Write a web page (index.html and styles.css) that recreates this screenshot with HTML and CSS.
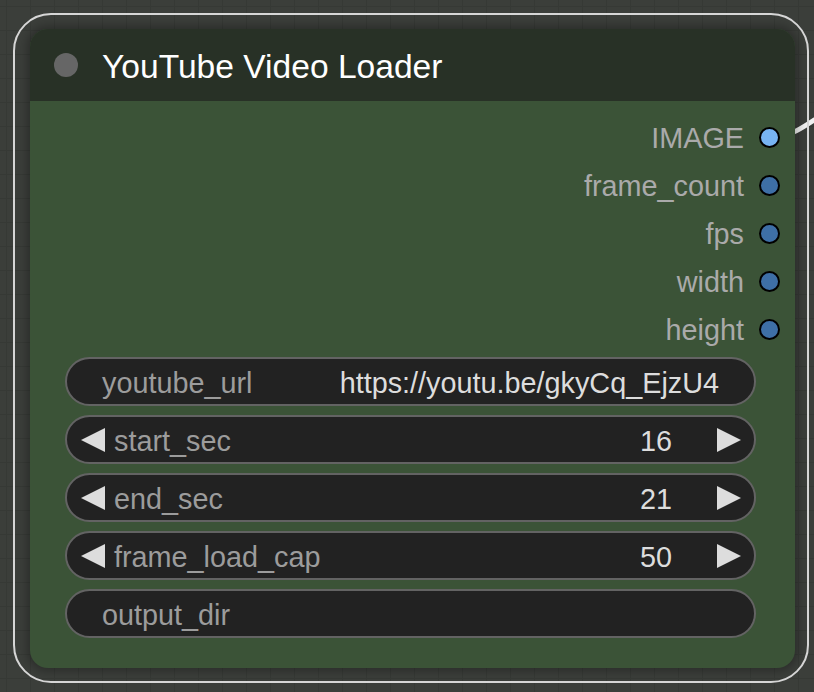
FILE: index.html
```html
<!DOCTYPE html>
<html>
<head>
<meta charset="utf-8">
<link rel="stylesheet" href="styles.css">
</head>
<body>
<svg class="link" width="814" height="692" viewBox="0 0 814 692">
  <path d="M770 137 C 790 137, 800 130, 832 108" fill="none" stroke="#f0f0f0" stroke-width="5" stroke-linecap="round"/>
</svg>
<div class="outline">
  <div class="node">
    <div class="title">
      <span class="title-dot"></span>
      <span class="title-text">YouTube Video Loader</span>
    </div>
    <div class="body">
      <div class="outputs">
        <div class="slot"><span class="slot-label">IMAGE</span><span class="pin pin-image"></span></div>
        <div class="slot"><span class="slot-label">frame_count</span><span class="pin"></span></div>
        <div class="slot"><span class="slot-label">fps</span><span class="pin"></span></div>
        <div class="slot"><span class="slot-label">width</span><span class="pin"></span></div>
        <div class="slot"><span class="slot-label">height</span><span class="pin"></span></div>
      </div>
      <div class="widgets">
        <div class="widget widget-text">
          <span class="label">youtube_url</span>
          <span class="value">https://youtu.be/gkyCq_EjzU4</span>
        </div>
        <div class="widget widget-number">
          <span class="arrow arrow-left"></span>
          <span class="label">start_sec</span>
          <span class="value">16</span>
          <span class="arrow arrow-right"></span>
        </div>
        <div class="widget widget-number">
          <span class="arrow arrow-left"></span>
          <span class="label">end_sec</span>
          <span class="value">21</span>
          <span class="arrow arrow-right"></span>
        </div>
        <div class="widget widget-number">
          <span class="arrow arrow-left"></span>
          <span class="label">frame_load_cap</span>
          <span class="value">50</span>
          <span class="arrow arrow-right"></span>
        </div>
        <div class="widget widget-text">
          <span class="label">output_dir</span>
          <span class="value"></span>
        </div>
      </div>
    </div>
  </div>
</div>
</body>
</html>
```

FILE: styles.css
```css
html, body {
  margin: 0;
  padding: 0;
}
body {
  width: 814px;
  height: 692px;
  overflow: hidden;
  position: relative;
  box-sizing: border-box;
  padding: 13px 0 0 13px;
  font-family: "Liberation Sans", Arial, sans-serif;
  background-color: #3b3e3a;
  background-image:
    linear-gradient(#363935 1px, transparent 1px),
    linear-gradient(90deg, #363935 1px, transparent 1px);
  background-size: 24px 24px;
  background-position: 6px 6px;
}
.link {
  position: absolute;
  left: 0;
  top: 0;
  z-index: 0;
}
.outline {
  position: relative;
  z-index: 1;
  box-sizing: border-box;
  width: 796px;
  height: 670px;
  border: 2px solid #d6d6d6;
  border-radius: 38px;
  padding: 14px 0 0 15px;
}
.node {
  width: 765px;
  height: 639px;
  border-radius: 18px;
  overflow: hidden;
  background: #3b5337;
  box-shadow: 0 0 10px 3px rgba(0, 0, 0, 0.28);
  display: flex;
  flex-direction: column;
}
.title {
  height: 72px;
  flex: none;
  background: #283126;
  display: flex;
  align-items: center;
}
.title-dot {
  width: 24px;
  height: 24px;
  border-radius: 50%;
  background: #666666;
  margin-left: 24px;
  flex: none;
}
.title-text {
  margin-left: 24px;
  padding-top: 4px;
  font-size: 33.6px;
  color: #ffffff;
  white-space: nowrap;
}
.body {
  flex: 1;
  padding-top: 12px;
}
.outputs {
  display: flex;
  flex-direction: column;
}
.slot {
  height: 48px;
  display: flex;
  align-items: center;
  justify-content: flex-end;
  padding-right: 15px;
}
.slot-label {
  font-size: 28.8px;
  color: #aaaaaa;
  margin-right: 15px;
  padding-top: 2px;
}
.pin {
  box-sizing: border-box;
  width: 21px;
  height: 21px;
  border-radius: 50%;
  border: 2px solid #000000;
  background: #3e6fa6;
}
.pin-image {
  background: #77b4f2;
}
.widgets {
  margin-top: 4px;
  margin-left: 35px;
  width: 691px;
  display: flex;
  flex-direction: column;
  gap: 9px;
}
.widget {
  box-sizing: border-box;
  height: 49px;
  border: 2px solid #636363;
  border-radius: 25px;
  background: #222222;
  display: flex;
  align-items: center;
  font-size: 28.8px;
  white-space: nowrap;
}
.widget-text {
  padding: 0 35px;
  justify-content: space-between;
}
.widget-number {
  padding: 0 13px 0 14px;
}
.label, .value {
  padding-top: 3px;
}
.label {
  color: #9c9c9c;
}
.value {
  color: #dddddd;
}
.widget-number .label {
  margin-left: 9px;
  flex: 1;
}
.widget-number .value {
  margin-right: 45px;
}
.arrow {
  width: 0;
  height: 0;
  border-top: 12px solid transparent;
  border-bottom: 12px solid transparent;
  flex: none;
}
.arrow-left {
  border-right: 24px solid #dddddd;
}
.arrow-right {
  border-left: 24px solid #dddddd;
}
```
